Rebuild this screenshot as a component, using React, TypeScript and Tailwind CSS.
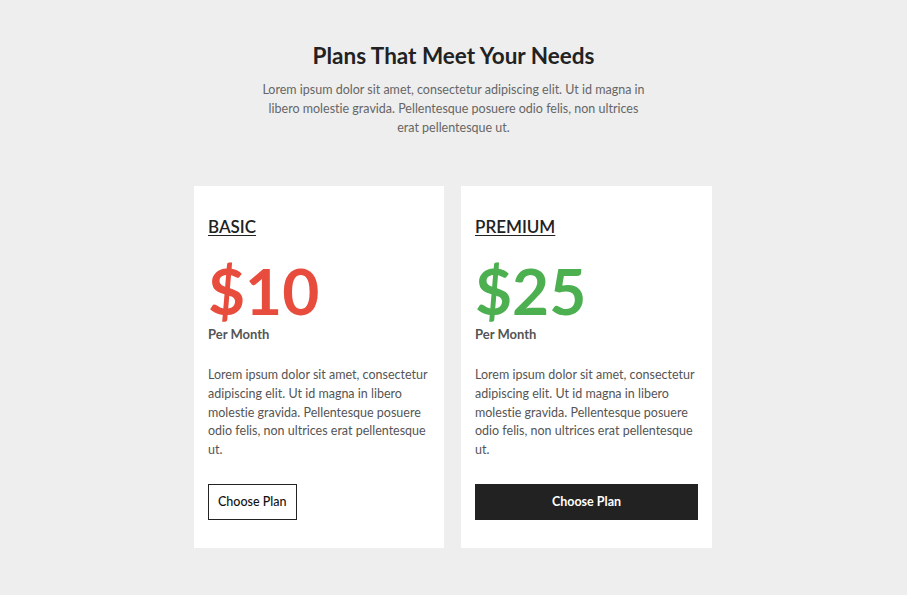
import React from "react";

type Plan = {
  name: string;
  price: string;
  priceClass: string;
  featured: boolean;
  widthClass: string;
};

const PLANS: Plan[] = [
  { name: "BASIC", price: "$10", priceClass: "text-[#e84c3d]", featured: false, widthClass: "w-[250px]" },
  { name: "PREMIUM", price: "$25", priceClass: "text-[#4caf50]", featured: true, widthClass: "w-[251px]" },
];

const DESCRIPTION =
  "Lorem ipsum dolor sit amet, consectetur adipiscing elit. Ut id magna in libero molestie gravida. Pellentesque posuere odio felis, non ultrices erat pellentesque ut.";

function PlanCard({ plan }: { plan: Plan }) {
  return (
    <div className={`flex flex-col bg-white px-[14px] pt-[29px] pb-[28px] ${plan.widthClass}`}>
      <h3 className="self-start text-[17px] font-semibold leading-6 text-[#222] underline decoration-1 underline-offset-2">
        {plan.name}
      </h3>
      <p className={`mt-[21px] text-[64px] font-bold leading-[62px] ${plan.priceClass}`}>{plan.price}</p>
      <p className="mt-[3px] text-[13px] font-bold leading-[18px] text-[#555]">Per Month</p>
      <p className="mt-[23px] text-[12.5px] leading-[18.8px] text-[#555]">{DESCRIPTION}</p>
      {plan.featured ? (
        <button
          type="button"
          className="mt-[24px] h-[36px] w-full bg-[#222] text-[12.5px] font-bold text-white"
        >
          Choose Plan
        </button>
      ) : (
        <button
          type="button"
          className="mt-[24px] h-[36px] self-start border border-[#222] px-[9px] text-[12.5px] font-medium text-[#111]"
        >
          Choose Plan
        </button>
      )}
    </div>
  );
}

export default function App() {
  return (
    <div className="min-h-[595px] bg-[#eeeeee] pt-[40px] font-['Lato',sans-serif] [font-variant-ligatures:none]">
      <div className="mx-auto flex max-w-[392px] flex-col items-center text-center">
        <h1 className="text-[22.5px] font-bold leading-8 text-[#222]">Plans That Meet Your Needs</h1>
        <p className="mt-[8px] text-[12.5px] leading-[19px] text-[#666]">{DESCRIPTION}</p>
      </div>
      <div className="mt-[49px] flex justify-center gap-[17px] pr-[1px]">
        {PLANS.map((plan) => (
          <PlanCard key={plan.name} plan={plan} />
        ))}
      </div>
    </div>
  );
}
